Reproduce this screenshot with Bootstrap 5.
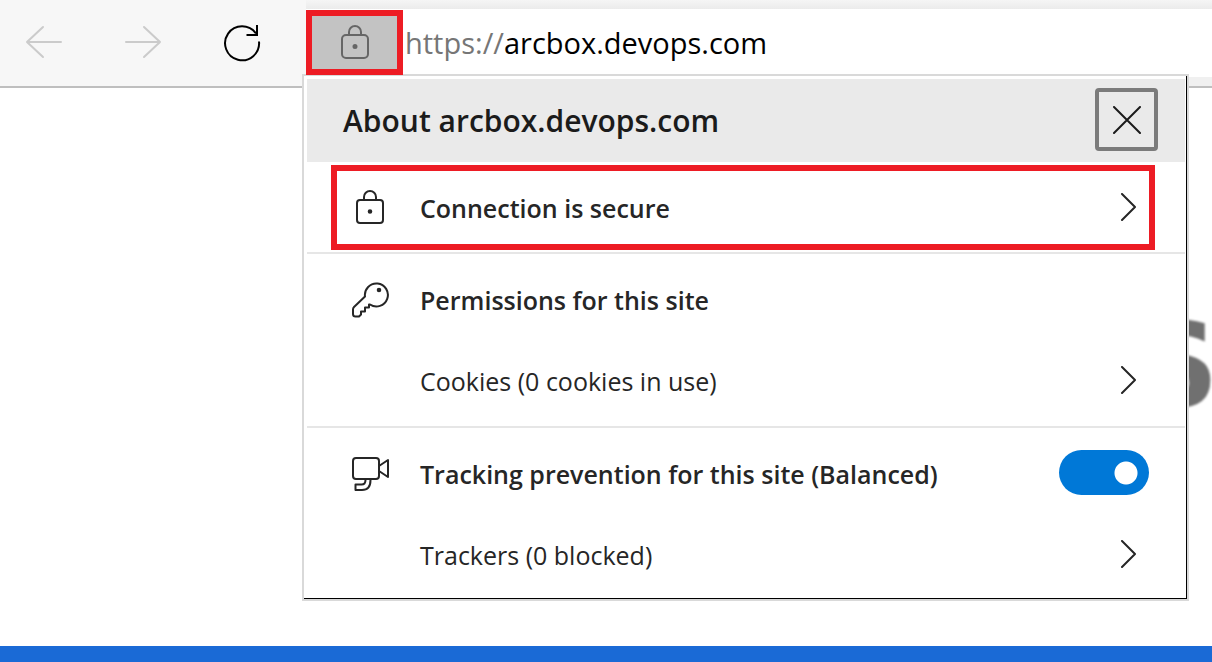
<!DOCTYPE html>
<html lang="en">
<head>
<meta charset="utf-8">
<meta name="viewport" content="width=device-width, initial-scale=1">
<title>arcbox.devops.com</title>
<link href="https://cdn.jsdelivr.net/npm/bootstrap@5.3.0/dist/css/bootstrap.min.css" rel="stylesheet">
<style>
  body { font-family: "Open Sans", "Noto Sans", sans-serif; color: #262626; }
  svg { display: block; fill: none; stroke: currentColor; stroke-width: 2; stroke-linecap: round; stroke-linejoin: round; }
  .toolbar { background: #f7f7f7; border-bottom: 2px solid #bfbfbf; height: 88px; }
  .nav-tools { width: 306px; padding: 0 44px 0 24px; }
  .nav-tools .btn { --bs-btn-padding-x: 0; --bs-btn-padding-y: 0; --bs-btn-border-width: 0; color: #000; }
  .nav-tools .btn:disabled { color: #cbcbcb; opacity: 1; }
  .address { background: linear-gradient(#f5f5f5, #ebebeb 9px, #fff 9px, #fff 77px, #f0f0f0 77px); }
  .lock-btn { width: 97px; height: 65px; margin-top: 10px; background: #c3c3c3; border: 6px solid #ed1c24; color: #666; z-index: 1; }
  .url { font-size: 29px; line-height: 68px; margin-top: 9px; padding-left: 2px; color: #000; }
  .scheme { color: #767676; }
  .site-panel { top: 74px; left: -4px; right: 23px; background: #fff; border: 2px solid #d9d9d9; }
  .panel-body { border: solid #000; border-width: 0 1px 1px 0; padding: 3px 1px 3px 3px; }
  .panel-head { background: #eaeaea; height: 83px; padding: 0 27px 2px 36px; }
  .panel-head h1 { font-size: 30px; color: #1b1b1b; padding-top: 2px; }
  .close-btn { width: 63px; height: 63px; background: none; border: 4px solid #7b7b7b; border-radius: 4px; color: #1b1b1b; }
  .site-row { width: 100%; height: 81px; padding: 0 49px 0 43px; font-size: 25px; border: 0; background: none; color: #262626; text-align: left; }
  .site-row .glyph { width: 40px; margin-right: 30px; flex: none; }
  .row-text { padding-top: 4px; }
  .secure { width: auto; height: 85px; margin: 3px 30px 2px 24px; padding: 0 13px 2px 13px; border: 6px solid #ed1c24; }
  .group { border-top: 2px solid #e6e6e6; padding: 4px 0 6px; }
  .group:last-child { padding-bottom: 1px; }
  .site-row .form-check-input { width: 90px; height: 45px; margin: 0 -13px 0 0; border: 0; background-color: #0078d7; background-size: 45px; background-position: right center;
    background-image: radial-gradient(circle at 22px 23px, #fff 11px, transparent 12px); }
  .wordmark { font-family: "DejaVu Sans", sans-serif; font-size: 118px; line-height: 158px; color: #707070; padding-top: 198px; margin-right: -7px; filter: blur(1px); }
  .band { background: #1a6ad6; height: 16px; }
</style>
</head>
<body class="bg-white vh-100 d-flex flex-column overflow-hidden">
<header class="toolbar d-flex flex-shrink-0 position-relative z-1">
  <nav class="nav-tools d-flex align-items-center justify-content-between flex-shrink-0" aria-label="Navigation">
    <button class="btn" type="button" disabled aria-label="Back"><svg width="40" height="40" viewBox="0 0 40 40"><path d="M37 19H3M19 4 3 19l16 15"/></svg></button>
    <button class="btn" type="button" disabled aria-label="Forward"><svg width="40" height="40" viewBox="0 0 40 40"><path d="M3 19h34M21 4l16 15-16 15"/></svg></button>
    <button class="btn" type="button" aria-label="Refresh"><svg width="40" height="40" viewBox="0 0 40 40"><path stroke-linecap="butt" stroke-linejoin="miter" d="M37 18.500A17 17 0 1 1 34 10.500M35 2v10H24.500"/></svg></button>
  </nav>
  <div class="address position-relative d-flex flex-grow-1">
    <button class="lock-btn position-relative d-flex align-items-center justify-content-center p-0" type="button" aria-label="View site information">
      <svg width="30" height="36" viewBox="0 0 30 36"><rect x="2" y="10" width="26" height="23" rx="4"/><path d="M9 10V7a6 6 0 0 1 12 0v3"/><circle cx="15" cy="21.500" r="1.500" fill="currentColor"/></svg>
    </button>
    <div class="url text-nowrap"><span class="scheme">https://</span>arcbox.devops.com</div>

    <section class="site-panel position-absolute" aria-label="Site information">
      <div class="panel-body">
        <div class="panel-head d-flex align-items-center justify-content-between">
          <h1 class="fw-semibold mb-0">About arcbox.devops.com</h1>
          <button class="close-btn d-flex align-items-center justify-content-center p-0" type="button" aria-label="Close"><svg width="28" height="28" viewBox="0 0 28 28"><path d="M1 1l26 26M27 1 1 27"/></svg></button>
        </div>
        <div class="d-flex">
          <button class="site-row secure d-flex align-items-center flex-grow-1" type="button">
            <span class="glyph"><svg class="mx-auto" width="30" height="36" viewBox="0 0 30 36"><rect x="2" y="11" width="26" height="23" rx="3"/><path d="M9 11V8a6 6 0 0 1 12 0v3"/><circle cx="15" cy="22.500" r="1.300" fill="currentColor"/></svg></span>
            <span class="row-text fw-semibold flex-grow-1">Connection is secure</span>
            <svg width="16" height="28" viewBox="0 0 16 28"><path d="M2 1l13 13L2 27"/></svg>
          </button>
        </div>
        <div class="group">
          <div class="site-row d-flex align-items-center">
            <span class="glyph"><svg width="40" height="40" viewBox="0 0 40 40"><path d="M15 17.500A11.500 11.500 0 1 1 20 25.500H19v3h-4v4h-4v3L9 37.500H5.500Q3 37.500 3 35v-4.500Q3 29 4 28L15 17.500Z"/><circle cx="29" cy="11" r="1.300" fill="currentColor"/></svg></span>
            <span class="row-text fw-semibold flex-grow-1">Permissions for this site</span>
          </div>
          <button class="site-row d-flex align-items-center" type="button">
            <span class="glyph"></span>
            <span class="row-text flex-grow-1">Cookies (0 cookies in use)</span>
            <svg width="16" height="28" viewBox="0 0 16 28"><path d="M2 1l13 13L2 27"/></svg>
          </button>
        </div>
        <div class="group">
          <div class="site-row d-flex align-items-center">
            <span class="glyph"><svg width="40" height="40" viewBox="0 0 40 40"><rect x="3" y="5" width="26" height="21" rx="3"/><path d="M29 13l9-6v17l-9-6M15.500 27c0 3-1 4.500-4 4.500H5.500V37H12c6 0 8.500-4 8.500-10"/></svg></span>
            <label class="row-text fw-semibold flex-grow-1" for="tracking">Tracking prevention for this site (Balanced)</label>
            <span class="form-switch p-0 d-flex"><input class="form-check-input" type="checkbox" role="switch" id="tracking" checked></span>
          </div>
          <button class="site-row d-flex align-items-center" type="button">
            <span class="glyph"></span>
            <span class="row-text flex-grow-1">Trackers (0 blocked)</span>
            <svg width="16" height="28" viewBox="0 0 16 28"><path d="M2 1l13 13L2 27"/></svg>
          </button>
        </div>
      </div>
    </section>
  </div>
</header>
<main class="flex-grow-1">
  <div class="wordmark fw-bold text-end">S</div>
</main>
<footer class="band flex-shrink-0"></footer>
<script src="https://cdn.jsdelivr.net/npm/bootstrap@5.3.0/dist/js/bootstrap.bundle.min.js"></script>
</body>
</html>
